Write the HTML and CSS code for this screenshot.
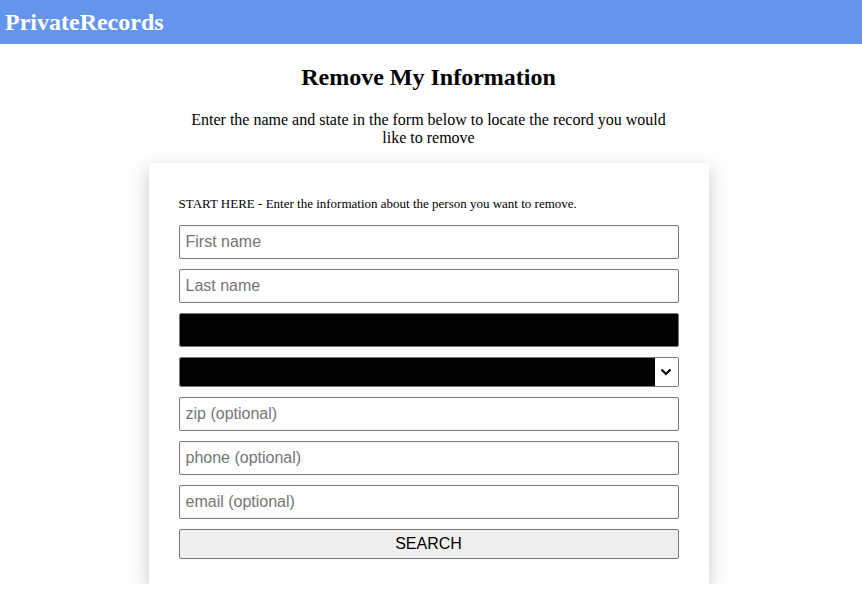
FILE: index.html
```html
<!DOCTYPE html>
<html>
<head>
<meta charset="utf-8">
<link rel="stylesheet" href="styles.css">
</head>
<body>
<header class="topbar"><span class="brand">PrivateRecords</span></header>
<main class="main">
  <h1 class="title">Remove My Information</h1>
  <p class="intro">Enter the name and state in the form below to locate the record you would like to remove</p>
  <form class="card">
    <p class="label">START HERE - Enter the information about the person you want to remove.</p>
    <input class="field" type="text" placeholder="First name">
    <input class="field" type="text" placeholder="Last name">
    <div class="field blackout"></div>
    <div class="selectbox">
      <span class="select-fill"></span>
      <span class="select-arrow">
        <svg width="12" height="8" viewBox="0 0 12 8"><path d="M1.5 1.5 L6 6 L10.5 1.5" fill="none" stroke="#000" stroke-width="2.2"/></svg>
      </span>
    </div>
    <input class="field" type="text" placeholder="zip (optional)">
    <input class="field" type="text" placeholder="phone (optional)">
    <input class="field" type="text" placeholder="email (optional)">
    <button class="search" type="button">SEARCH</button>
  </form>
</main>
</body>
</html>
```

FILE: styles.css
```css
html, body {
  margin: 0;
  padding: 0;
  background: #fff;
  font-family: "Liberation Serif", "Times New Roman", serif;
  color: #000;
}
.topbar {
  height: 44px;
  background: #6495ed;
  display: flex;
  align-items: center;
  padding-left: 5px;
}
.brand {
  color: #fff;
  font-weight: bold;
  font-size: 24px;
}
.main {
  display: flex;
  flex-direction: column;
  align-items: center;
  padding-right: 5px;
}
.title {
  font-size: 24px;
  font-weight: bold;
  margin: 19px 0 0;
  line-height: 28px;
}
.intro {
  width: 480px;
  text-align: center;
  font-size: 16px;
  line-height: 18px;
  margin: 20px 0 16px;
}
.card {
  width: 500px;
  padding: 30px 30px 25px;
  background: #fff;
  box-shadow: 0 6px 18px rgba(0,0,0,0.22);
  display: flex;
  flex-direction: column;
  gap: 10px;
}
.label {
  font-size: 13px;
  margin: 3px 0 4px;
  line-height: 15px;
}
.field {
  box-sizing: border-box;
  height: 34px;
  width: 100%;
  border: 1px solid #767676;
  border-radius: 2px;
  padding: 0 6px;
  font-family: "Liberation Sans", Arial, sans-serif;
  font-size: 16px;
  margin: 0;
  background: #fff;
}
.field::placeholder {
  color: #757575;
}
.blackout {
  background: #000;
}
.selectbox {
  box-sizing: border-box;
  height: 30px;
  border: 1px solid #767676;
  border-radius: 2px;
  display: flex;
  overflow: hidden;
}
.select-fill {
  flex: 1;
  background: #000;
}
.select-arrow {
  width: 23px;
  background: #fff;
  display: flex;
  align-items: center;
  justify-content: center;
}
.search {
  box-sizing: border-box;
  height: 30px;
  width: 100%;
  border: 1px solid #767676;
  border-radius: 2px;
  background: #efefef;
  font-family: "Liberation Sans", Arial, sans-serif;
  font-size: 16px;
  color: #000;
  margin: 0;
}
```
